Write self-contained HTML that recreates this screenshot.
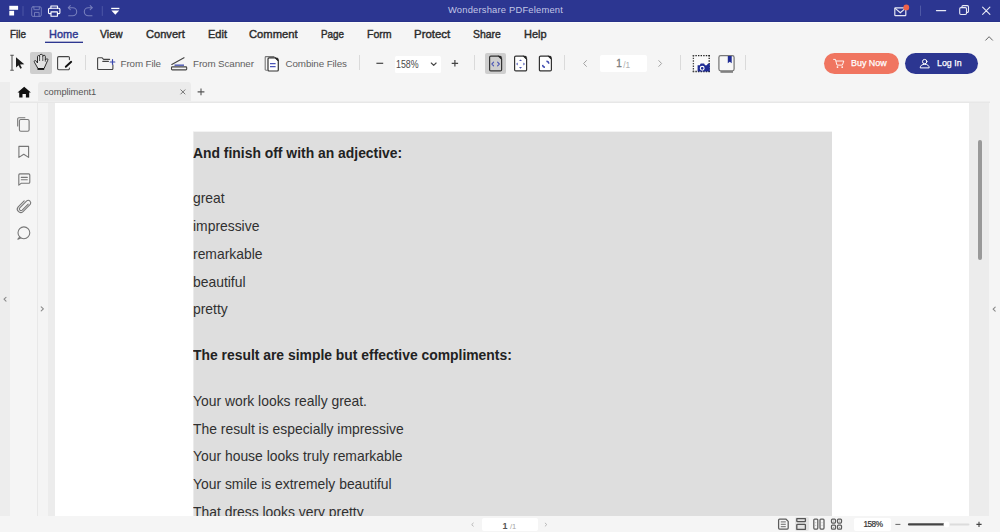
<!DOCTYPE html>
<html>
<head>
<meta charset="utf-8">
<title>Wondershare PDFelement</title>
<style>
html,body{margin:0;padding:0;}
body{width:1000px;height:532px;overflow:hidden;position:relative;background:#f5f5f5;font-family:"Liberation Sans",sans-serif;color:#222;}
.abs{position:absolute;}
#titlebar{left:0;top:0;width:1000px;height:22px;background:#2c3691;}
#titleedge{left:0;top:21px;width:1000px;height:2px;background:linear-gradient(#283289 50%,#fbfbfb 50%);}
#title{left:448px;top:3.4px;height:14px;line-height:14px;color:#c2c6e6;font-size:9.4px;letter-spacing:0.19px;white-space:nowrap;}
.mi{position:absolute;top:26.5px;height:15px;line-height:15px;font-size:11px;white-space:nowrap;transform-origin:0 0;-webkit-text-stroke:0.4px #2b2b2b;}
.tl{position:absolute;top:57px;height:14px;line-height:14px;font-size:9.8px;letter-spacing:-0.1px;color:#5f5f5f;white-space:nowrap;}
.sep{position:absolute;top:55px;width:1px;height:15px;background:#dadada;}
.btnbg{position:absolute;background:#cecece;border-radius:2px;}
.wbox{position:absolute;background:#fff;border-radius:2px;}
#tab{left:38px;top:82px;width:153px;height:19px;background:#ebebeb;border-radius:3px 3px 0 0;}
#tabname{left:44px;top:85px;font-size:9.3px;line-height:14px;color:#555;letter-spacing:-0.05px;white-space:nowrap;}
#tabline{left:10px;top:101px;width:980px;height:2px;background:linear-gradient(#eeeeee 50%,#e7e7e7 50%);}
#leftedge{left:0;top:82px;width:10px;height:434px;background:#ededed;}
#sidebar{left:10px;top:103px;width:27px;height:413px;background:#f5f5f5;}
#sideborder{left:37px;top:103px;width:1px;height:413px;background:#e8e8e8;}
#strip1{left:38px;top:103px;width:10px;height:413px;background:#f4f4f4;}
#strip2{left:48px;top:103px;width:7px;height:413px;background:#ececec;}
#page{left:55px;top:103px;width:914px;height:413px;background:#fff;}
#graybox{left:193px;top:132px;width:639px;height:384px;background:#dedede;border-left:1px solid #ebebeb;box-sizing:border-box;}
#scrolltrack{left:969px;top:103px;width:20px;height:413px;background:#ececec;}
#thumb{left:978px;top:140px;width:4px;height:120px;background:#999;border-radius:2px;}
#statusbar{left:0;top:516px;width:1000px;height:16px;background:#f5f5f5;}
.doc{position:absolute;left:0;white-space:nowrap;color:#303030;font-size:13.9px;line-height:18px;height:18px;}
.doc.b{font-weight:bold;font-size:13.9px;color:#222;}
#docclip{left:193px;top:132px;width:639px;height:384px;overflow:hidden;}
.pill{position:absolute;top:53px;height:21px;border-radius:11px;}
.pt{position:absolute;top:56.4px;height:14px;line-height:14px;font-size:9.3px;color:#fff;white-space:nowrap;transform-origin:0 0;-webkit-text-stroke:0.25px #fff;}
#svg{position:absolute;left:0;top:0;}
</style>
</head>
<body>
<div id="titlebar" class="abs"></div>
<div id="titleedge" class="abs"></div>
<div id="title" class="abs">Wondershare PDFelement</div>
<div class="mi" style="left:9.9px;transform:scaleX(0.901);color:#2b2b2b;-webkit-text-stroke-color:#2b2b2b">File</div>
<div class="mi" style="left:48.9px;transform:scaleX(0.997);color:#2d3790;-webkit-text-stroke-color:#2d3790">Home</div>
<div class="mi" style="left:100.2px;transform:scaleX(0.954);color:#2b2b2b;-webkit-text-stroke-color:#2b2b2b">View</div>
<div class="mi" style="left:146.0px;transform:scaleX(1.008);color:#2b2b2b;-webkit-text-stroke-color:#2b2b2b">Convert</div>
<div class="mi" style="left:207.6px;transform:scaleX(1.005);color:#2b2b2b;-webkit-text-stroke-color:#2b2b2b">Edit</div>
<div class="mi" style="left:249.0px;transform:scaleX(1.019);color:#2b2b2b;-webkit-text-stroke-color:#2b2b2b">Comment</div>
<div class="mi" style="left:320.6px;transform:scaleX(0.898);color:#2b2b2b;-webkit-text-stroke-color:#2b2b2b">Page</div>
<div class="mi" style="left:366.5px;transform:scaleX(0.961);color:#2b2b2b;-webkit-text-stroke-color:#2b2b2b">Form</div>
<div class="mi" style="left:414.2px;transform:scaleX(1.040);color:#2b2b2b;-webkit-text-stroke-color:#2b2b2b">Protect</div>
<div class="mi" style="left:473.0px;transform:scaleX(0.949);color:#2b2b2b;-webkit-text-stroke-color:#2b2b2b">Share</div>
<div class="mi" style="left:524.0px;transform:scaleX(1.000);color:#2b2b2b;-webkit-text-stroke-color:#2b2b2b">Help</div>
<div class="abs" style="left:45px;top:42px;width:38px;height:1px;background:#2d3790"></div>
<div class="abs" style="left:45px;top:41px;width:38px;height:1px;background:#2d3790;opacity:.35"></div>

<div class="btnbg" style="left:30px;top:52px;width:22px;height:22px"></div>
<div class="sep" style="left:85px"></div>
<div class="tl" style="left:120.5px">From File</div>
<div class="tl" style="left:193px">From Scanner</div>
<div class="tl" style="left:285.5px">Combine Files</div>
<div class="sep" style="left:359px"></div>
<div class="wbox" style="left:394.5px;top:56px;width:46.5px;height:17px;border-radius:1.5px"></div>
<div class="abs" style="left:396.3px;top:58px;font-size:10.3px;line-height:14px;color:#4a4a4a;transform:scaleX(0.86);transform-origin:0 0">158%</div>
<div class="sep" style="left:474px"></div>
<div class="btnbg" style="left:485px;top:53px;width:21px;height:21px"></div>
<div class="sep" style="left:564px"></div>
<div class="wbox" style="left:599.5px;top:55px;width:47.5px;height:17px"></div>
<div class="abs" style="left:616.2px;top:56.6px;font-size:10px;line-height:14px;color:#7a7a7a;-webkit-text-stroke:0.3px #7a7a7a">1</div>
<div class="abs" style="left:623.2px;top:58.5px;font-size:8.3px;line-height:12px;color:#b0b0b0">/1</div>
<div class="sep" style="left:680px"></div>
<div class="sep" style="left:745px"></div>
<div class="pill" style="left:823.5px;width:75.5px;background:#f07560"></div>
<div class="pt" style="left:851.3px;transform:scaleX(0.96)">Buy Now</div>
<div class="pill" style="left:905px;width:73px;background:#2c3691"></div>
<div class="pt" style="left:936.8px;transform:scaleX(0.95)">Log In</div>

<div id="leftedge" class="abs"></div>
<div id="tab" class="abs"></div>
<div id="tabname" class="abs">compliment1</div>
<div id="tabline" class="abs"></div>
<div id="sidebar" class="abs"></div>
<div id="sideborder" class="abs"></div>
<div id="strip1" class="abs"></div>
<div id="strip2" class="abs"></div>
<div id="page" class="abs"></div>
<div class="abs" style="left:193px;top:131px;width:639px;height:1px;background:#f3f3f3"></div>
<div id="graybox" class="abs"></div>
<div id="scrolltrack" class="abs"></div>
<div id="thumb" class="abs"></div>

<div id="docclip" class="abs">
<div class="doc b" style="top:12px">And finish off with an adjective:</div>
<div class="doc" style="top:57px">great</div>
<div class="doc" style="top:85px">impressive</div>
<div class="doc" style="top:113px">remarkable</div>
<div class="doc" style="top:141px">beautiful</div>
<div class="doc" style="top:168px">pretty</div>
<div class="doc b" style="top:214px">The result are simple but effective compliments:</div>
<div class="doc" style="top:260px">Your work looks really great.</div>
<div class="doc" style="top:288px">The result is especially impressive</div>
<div class="doc" style="top:315px">Your house looks truly remarkable</div>
<div class="doc" style="top:343px">Your smile is extremely beautiful</div>
<div class="doc" style="top:371px">That dress looks very pretty</div>
</div>

<div id="statusbar" class="abs"></div>
<div class="wbox" style="left:482px;top:518px;width:55.5px;height:13px;border-radius:2px"></div>
<div class="abs" style="left:502.5px;top:520px;font-size:9px;line-height:12px;font-weight:bold;color:#555">1</div>
<div class="abs" style="left:510px;top:521.5px;font-size:7.5px;line-height:10px;color:#a5a5a5">/1</div>
<div class="abs" style="left:794.5px;top:516.5px;width:14px;height:14.5px;background:#e4e4e4;border-radius:2px"></div>
<div class="wbox" style="left:854px;top:518px;width:37px;height:12.5px"></div>
<div class="abs" style="left:863.5px;top:519.4px;font-size:8.2px;line-height:12px;letter-spacing:-0.5px;color:#333;-webkit-text-stroke:0.2px #333">158%</div>

<svg id="svg" width="1000" height="532" viewBox="0 0 1000 532" fill="none" stroke-linecap="round" stroke-linejoin="round">
<!-- ===== title bar ===== -->
<g id="logo" fill="#fff" stroke="none">
<path d="M9.3 5.8h8.8v4h-8.8z"/>
<path d="M9.3 10.8h4.8v4.7h-4.8z"/>
</g>
<path d="M23 6.5v9" stroke="#4d57a5" stroke-width="1"/>
<!-- save (dim) -->
<g stroke="#767ebc" stroke-width=".95">
<rect x="31.7" y="6.8" width="9.6" height="9.6" rx="1.3"/>
<path d="M33.9 7v2.7h5.4v-2.7"/>
<path d="M34.5 16.2v-3.8h4.6v3.8"/>
</g>
<!-- print -->
<g stroke="#fff" stroke-width="1.1">
<path d="M50.9 8.2v-2.2h6.6v2.2"/>
<path d="M50.8 13.6h-1.4a.9.9 0 0 1-.9-.9v-3.5a1 1 0 0 1 1-1h9.4a1 1 0 0 1 1 1v3.5a.9.9 0 0 1-.9.9h-1.4"/>
<path d="M51 11.9h6.4v4.4h-6.4z"/>
</g>
<!-- undo / redo (dim) -->
<g stroke="#767ebc" stroke-width="1.1">
<path d="M68.6 7.7h4.1a4 4 0 0 1 0 8h-4"/>
<path d="M70.3 5.7l-2 2 2 2"/>
<path d="M92 7.7h-3.7a4 4 0 0 0 0 8h3.7"/>
<path d="M90.2 5.7l2 2-2 2"/>
</g>
<path d="M102.3 6.5v9" stroke="#4d57a5" stroke-width="1"/>
<!-- dropdown -->
<g fill="#fff" stroke="none">
<rect x="111.2" y="7.8" width="8.2" height="1.3"/>
<path d="M111.4 10.4h7.8l-3.9 4.3z"/>
</g>
<!-- mail -->
<g stroke="#e4e6f3" stroke-width="1.2">
<rect x="894.8" y="7.800000000000001" width="11" height="7.9" rx=".6"/>
<path d="M895.2 8.4l5.1 4.4 5.1-4.4"/>
</g>
<circle cx="906.3" cy="7.4" r="2.9" fill="#f1614a" stroke="none"/>
<path d="M920.5 6v9.5" stroke="#4f59a6" stroke-width="1"/>
<!-- min / restore / close -->
<g stroke="#e8eaf5" stroke-width="1.1">
<path d="M936.4 10.6h9.3"/>
<rect x="959.7" y="7.6" width="6.8" height="6.9" rx="1.2"/>
<path d="M961.9 7.4v-.6a1.200000000000001 1.200000000000001 0 0 1 1.200000000000001-1.2h4.2a1.200000000000001 1.200000000000001 0 0 1 1.200000000000001 1.2v4.4a1.200000000000001 1.200000000000001 0 0 1-1.200000000000001 1.2h-.6"/>
<path d="M982.6 7.1l7.300000000000001 7.300000000000001M989.9 7.1l-7.300000000000001 7.300000000000001"/>
</g>
<!-- collapse chevron -->
<path d="M985.7 40.2l3.4-3.5 3.4 3.5" stroke="#5e5e5e" stroke-width=".95"/>

<!-- ===== toolbar ===== -->
<!-- select tool -->
<g stroke="#555" stroke-width="1.1" stroke-linecap="butt">
<path d="M12 55v15.5M10.3 55.2h3.5M10.3 70.3h3.5"/>
</g>
<path d="M16 57.2v10.2l2.500000000000001-2.2 1.8 3.5 1.6-.8-1.8-3.4 4.2-.3z" fill="#1c1c1c" stroke="none"/>
<!-- hand -->
<path d="M37.8 68.2L34.4 62.2C33.8 61 35 60 35.8 60.8L37.5 63V56.6C37.5 55.2 39.6 55.2 39.6 56.6V55.4C39.6 54 42.8 54 42.8 55.4V56.3C42.8 54.9 45.3 54.9 45.3 56.3V60L46.3 59C47.2 58.2 48.4 59.2 47.7 60.3L44.2 68.2Z" fill="#e3e3e3" stroke="#222" stroke-width=".95"/>
<path d="M39.6 56.6V60.6M42.8 56.3V60.6M45.3 60V61.3" stroke="#333" stroke-width=".85"/>
<rect x="37.5" y="68.2" width="6.7" height="1.7" fill="#111" stroke="none"/>
<!-- edit -->
<path d="M69.4 59.6v-1.8a1.2 1.2 0 0 0-1.2-1.2h-9.4a1.2 1.2 0 0 0-1.2 1.2v10.7a1.2 1.2 0 0 0 1.2 1.2h9.4a1.2 1.2 0 0 0 1.2-1.2v-.5" stroke="#444" stroke-width="1.1"/>
<path d="M65.8 66.8l5.4-5" stroke="#111" stroke-width="1.9" stroke-linecap="round"/>
<!-- folder -->
<g stroke="#444" stroke-width="1.1">
<path d="M109.6 59.4h-6l-1.700000000000001-1.700000000000001h-3.4a.9.9 0 0 0-.9.9v10a.9.9 0 0 0 .9.9h13.5a.9.9 0 0 0 .9-.9v-3.700000000000001"/>
<path d="M102.80000000000001 61.400000000000006h5.6"/>
</g>
<path d="M112.5 59.7v4.6M110.2 62h4.6" stroke="#3846ad" stroke-width="1.2"/>
<!-- scanner -->
<g stroke="#444" stroke-width="1.1">
<path d="M171.8 64.5l12.2-6.800000000000001"/>
<rect x="171.5" y="66.9" width="15.2" height="3" rx=".8"/>
</g>
<path d="M174.5 65.2h9.5" stroke="#5560b5" stroke-width="1.5" stroke-linecap="butt"/>
<!-- combine -->
<path d="M267 70.2h-1a.8.8 0 0 1-.8-.8v-12a.8.8 0 0 1 .8-.8h8" stroke="#777" stroke-width="1.1"/>
<path d="M268 58.9a1 1 0 0 1 1-1h6.300000000000001l3 3v9.1a1 1 0 0 1-1 1h-8.3a1 1 0 0 1-1-1z" fill="#fff" stroke="#333" stroke-width="1.2"/>
<path d="M275.3 57.9l3 3v-1.6a1.4 1.4 0 0 0-1.4-1.4z" fill="#222" stroke="#222" stroke-width=".6"/>
<path d="M270 63.6h5.6M270 66.6h5.6" stroke="#4b55b8" stroke-width="1.2" stroke-linecap="butt"/>
<!-- zoom -, chevron, + -->
<g stroke="#444" stroke-width="1.2" stroke-linecap="butt">
<path d="M376.4 63.3h6.800000000000001"/>
<path d="M451.7 63.3h6.4M454.9 60.1v6.4"/>
</g>
<path d="M431.3 63l2.4 2.4 2.4-2.4" stroke="#444" stroke-width="1.15"/>
<!-- view mode icons -->
<g stroke="#333" stroke-width="1.2">
<path d="M489.6 57.300000000000004a1.2 1.2 0 0 1 1.2-1.2h7.7l3.1 3.1v10.5a1.2 1.2 0 0 1-1.2 1.2h-9.6a1.2 1.2 0 0 1-1.2-1.2z"/>
<path d="M514.6 57.300000000000004a1.2 1.2 0 0 1 1.2-1.2h7.7l3.1 3.1v10.5a1.2 1.2 0 0 1-1.2 1.2h-9.6a1.2 1.2 0 0 1-1.2-1.2z" fill="#fff"/>
<path d="M539.4 57.300000000000004a1.2 1.2 0 0 1 1.2-1.2h7.7l3.1 3.1v10.5a1.2 1.2 0 0 1-1.2 1.2h-9.6a1.2 1.2 0 0 1-1.2-1.2z" fill="#fff"/>
</g>
<g fill="#222" stroke="#222" stroke-width=".5">
<path d="M498.5 56.1l3.1 3.1v-1.7a1.4 1.4 0 0 0-1.4-1.4z"/>
<path d="M523.5 56.1l3.1 3.1v-1.7a1.4 1.4 0 0 0-1.4-1.4z"/>
<path d="M548.3 56.1l3.1 3.1v-1.7a1.4 1.4 0 0 0-1.4-1.4z"/>
</g>
<g stroke="#4a55b5" stroke-width="1.1">
<path d="M493.6 62.2l-1.700000000000001 1.8 1.700000000000001 1.8M497.6 62.2l1.700000000000001 1.8-1.700000000000001 1.8"/>

</g>
<g fill="#4a55b5" stroke="none">
<path d="M520.5 59.5l1.5 1.6h-3z"/>
<path d="M546.4 61.300000000000004c1.5.1 2.3.9 2.400000000000001 2.400000000000001M542.6 64.9c.1 1.5.9 2.3 2.400000000000001 2.400000000000001" fill="none" stroke="#3f4bb0" stroke-width="1.4" stroke-linecap="butt"/>
<path d="M520.5 68.7l1.5-1.6h-3z"/>
<path d="M516.1 64l1.6-1.5v3z"/>
<path d="M525 64l-1.6-1.5v3z"/>
</g>
<!-- page nav -->
<path d="M586.4 60.6l-2.8 2.900000000000001 2.8 2.900000000000001M658.8 60.6l2.8 2.900000000000001-2.8 2.900000000000001" stroke="#a2a2a2" stroke-width="1"/>
<!-- snapshot -->
<rect x="693.5" y="55.8" width="15.6" height="15.3" fill="#fafafa" stroke="none"/>
<g stroke="#222" stroke-width="1.3" stroke-dasharray="1.4 1.2" stroke-linecap="butt"><path d="M692.8 55.7h17"/><path d="M709.2 55.1v17"/><path d="M692.8 71.5h17"/><path d="M693.4 55.1v17" stroke="#444"/></g>
<path d="M697.6 65.2h2.2l.9-1.700000000000001h3.4l.9 1.700000000000001h1.700000000000001l1.2-1.5h1.900000000000001v7.700000000000001h-12.2z" fill="#1f2c94" stroke="none"/>
<circle cx="702.2" cy="68.3" r="1.9" fill="#1f2c94" stroke="#fff" stroke-width="1.1"/>
<!-- book -->
<rect x="720.5" y="70.7" width="12.5" height="2.2" fill="#8a8a8a" stroke="none"/>
<rect x="718.9" y="55.7" width="15.2" height="15.2" rx="1.8" fill="#f7f7f7" stroke="#777" stroke-width="1.25"/>
<path d="M727.8 55.9h3.900000000000001v7.300000000000001l-1.950000000000001-1.4-1.950000000000001 1.4z" fill="#1f2c94" stroke="none"/>
<!-- cart -->
<g stroke="#fff" stroke-width=".9">
<path d="M833.6 59.400000000000006h1.8l1.6 5.7h5.4l1.400000000000001-4.1h-7.4"/>
</g>
<circle cx="837.5" cy="67.10000000000001" r=".9" fill="#fff" stroke="none"/>
<circle cx="842.2" cy="67.10000000000001" r=".9" fill="#fff" stroke="none"/>
<!-- user -->
<g stroke="#fff" stroke-width="1">
<circle cx="924.7" cy="61.6" r="2.2"/>
<path d="M920.2 67.5c0-2 2-3.2 4.5-3.2s4.5 1.2 4.5 3.2z"/>
</g>

<!-- ===== tab bar ===== -->
<path d="M24.2 86.8l6.7 5.8h-1.7v4.8h-3.3v-3.5h-3.4v3.5h-3.3v-4.8h-1.7z" fill="#111" stroke="none"/>
<path d="M180.8 89.8l4.2 4.2M185 89.8l-4.2 4.2" stroke="#777" stroke-width="1"/>
<path d="M197.6 91.9h6.800000000000001M201 88.5v6.800000000000001" stroke="#555" stroke-width="1.1" stroke-linecap="butt"/>

<!-- ===== sidebar ===== -->
<g stroke="#777" stroke-width="1.1">
<path d="M17.7 126v-7a1.2 1.2 0 0 1 1.2-1.2h6"/>
<rect x="19.400000000000002" y="119.5" width="9.700000000000001" height="11.700000000000001" rx="1.4"/>
<path d="M18.900000000000002 146.4h9.700000000000001v11l-4.850000000000001-3.2-4.850000000000001 3.2z"/>
<path d="M19.8 173.9h9a1 1 0 0 1 1 1v7.4a1 1 0 0 1-1 1h-7.7l-2.3 1.900000000000001v-10.3a1 1 0 0 1 1-1z"/>
<path d="M21.3 177.4h6M21.3 179.8h6"/>
<path d="M28.2 204.2l-6 6a1.7 1.7 0 0 1-2.4-2.4l6.9-6.9a2.5 2.500000000000001 0 0 1 3.5 3.5l-7.2 7.2a3.4 3.4 0 0 1-4.800000000000001-4.800000000000001l6-6"/>
<circle cx="23.900000000000002" cy="232.8" r="5.9"/>
<path d="M19.6 237l-1.700000000000001 2.2 2.900000000000001-1.1"/>
</g>
<!-- collapse arrows -->
<g stroke="#8a8a8a" stroke-width="1.1">
<path d="M6 297.3l-2 1.9 2 1.9"/>
<path d="M41.2 306.8l2.2 2-2.2 2"/>
<path d="M995.2 307.1l-2.1 2 2.1 2"/>
</g>

<!-- ===== status bar ===== -->
<path d="M473.3 523.1l-1.6 1.5 1.6 1.5M545.2 523.1l1.6 1.5-1.6 1.5" stroke="#b0b0b0" stroke-width=".9"/>
<g stroke="#5c5c5c" stroke-width="1.25">
<path d="M778.6 520a1 1 0 0 1 1-1h6.2l2.4 2.4v6.600000000000001a1 1 0 0 1-1 1h-7.6a1 1 0 0 1-1-1z"/>
<path d="M781.2 521.9h4.2M781.2 524.3h4.2M781.2 526.7h4.2" stroke-width=".9"/>
<path d="M796.8 518.7v2.2a.8.8 0 0 0 .8.8h7a.8.8 0 0 0 .8-.8v-2.2z" stroke="#555" stroke-width="1.3"/>
<path d="M796.8 529.3v-4.2a.8.8 0 0 1 .8-.8h7a.8.8 0 0 1 .8.8v4.2z" stroke="#555" stroke-width="1.3"/>
<rect x="813.8" y="519" width="4" height="10" rx=".9"/>
<rect x="820" y="519" width="4" height="10" rx=".9"/>
<rect x="831.5" y="519" width="4" height="4" rx=".9"/>
<rect x="837.5" y="519" width="4" height="4" rx=".9"/>
<rect x="831.5" y="525.2" width="4" height="4" rx=".9"/>
<rect x="837.5" y="525.2" width="4" height="4" rx=".9"/>
</g>
<g fill="#888" stroke="none">
<circle cx="815.8" cy="522.7" r=".45"/><circle cx="815.8" cy="525.3" r=".45"/>
<circle cx="822" cy="522.7" r=".45"/><circle cx="822" cy="525.3" r=".45"/>
<circle cx="833.5" cy="521" r=".5"/><circle cx="839.5" cy="521" r=".5"/>
<circle cx="833.5" cy="527.2" r=".5"/><circle cx="839.5" cy="527.2" r=".5"/>
</g>
<path d="M895.4 524.4h5" stroke="#666" stroke-width="1" stroke-linecap="butt"/>
<path d="M948 524.5h20.5" stroke="#dcdcdc" stroke-width="2"/>
<path d="M909 524.4h35" stroke="#444" stroke-width="2.2"/>
<circle cx="946.6" cy="524.5" r="3" fill="#fff" stroke="none"/>
<path d="M976.4 524.4h5.2M979 521.8v5.2" stroke="#444" stroke-width="1.1" stroke-linecap="butt"/>
</svg>

</body>
</html>
